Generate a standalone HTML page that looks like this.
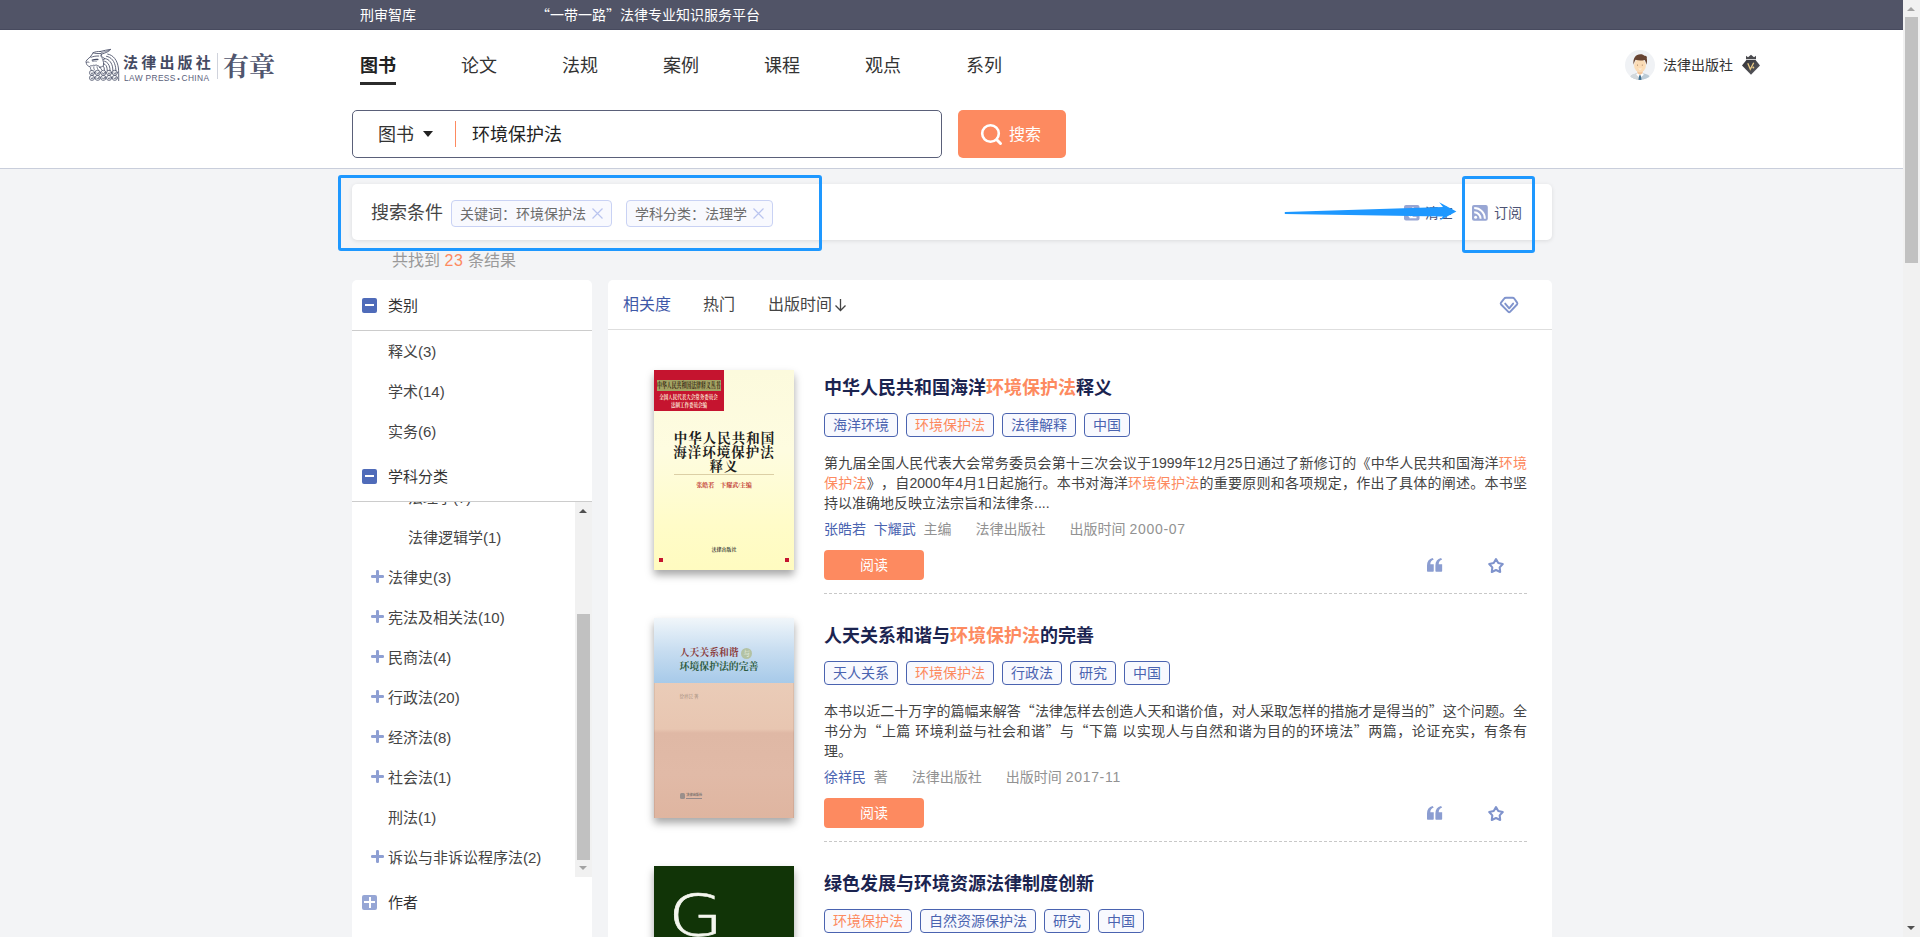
<!DOCTYPE html>
<html lang="zh-CN">
<head>
<meta charset="utf-8">
<title>有章 - 图书搜索</title>
<style>
*{box-sizing:border-box;margin:0;padding:0}
html,body{width:1920px;height:937px;overflow:hidden}
body{position:relative;background:#f3f4f6;font-family:"Liberation Sans","Noto Sans CJK SC",sans-serif;color:#333;font-size:14px;text-spacing-trim:space-all}
.abs{position:absolute}
/* top bar */
#topbar{position:absolute;left:0;top:0;width:1903px;height:30px;background:#515467;border-bottom:1px solid #474a5e;color:#fff;font-size:14px;line-height:30px}
#topbar>span{position:absolute;top:0;white-space:nowrap}
/* header */
#header{position:absolute;left:0;top:30px;width:1903px;height:139px;background:#fff;border-bottom:1px solid #c9cedb}
.nav{position:absolute;top:51px;height:30px;line-height:30px;font-size:18px;color:#333;white-space:nowrap}
.nav.on{font-weight:700;color:#222}
.nav.on:after{content:"";position:absolute;left:0;right:0;top:31px;height:3px;background:#2b2b2b}
#sbox{position:absolute;left:352px;top:110px;width:590px;height:48px;border:1px solid #5a6079;border-radius:5px;background:#fff}
#sbtn{position:absolute;left:958px;top:110px;width:108px;height:48px;border-radius:5px;background:#fd8a60;color:#fff;font-size:16px}
/* scrollbar */
#vsb{position:absolute;left:1903px;top:0;width:17px;height:937px;background:#f1f1f1}
#vsb .thumb{position:absolute;left:2px;top:17px;width:13px;height:246px;background:#c1c1c1}
.tri-up{position:absolute;width:0;height:0;border-left:4px solid transparent;border-right:4px solid transparent;border-bottom:4px solid #a3a3a3}
.tri-dn{position:absolute;width:0;height:0;border-left:4px solid transparent;border-right:4px solid transparent;border-top:4px solid #505050}
/* condition card */
#cond{position:absolute;left:352px;top:184px;width:1200px;height:56px;background:#fff;border-radius:5px;box-shadow:0 1px 4px rgba(0,0,0,.10)}
.ctag{position:absolute;top:16px;height:27px;border:1px solid #c9d2f4;border-radius:4px;background:#f8f9fe;font-size:14px;line-height:27px;color:#6c6c6c;white-space:nowrap;padding-left:8px}
.hl-rect{position:absolute;border:3px solid #1e98ff;border-radius:3px}
/* panels */
#left{position:absolute;left:352px;top:280px;width:240px;height:657px;background:#fff;border-radius:5px 5px 0 0}
#right{position:absolute;left:608px;top:280px;width:944px;height:657px;background:#fff;border-radius:5px 5px 0 0}
.fh{position:absolute;left:0;width:240px;height:50px}
.fh .ic{position:absolute;left:10px;top:17.500px;width:15px;height:15px;border-radius:2px;background:#4f6bb9}
.fh .ic:before{content:"";position:absolute;left:3px;top:6.5px;width:9px;height:2px;background:#fff}
.fh .ic.plus{background:#96a6d5}
.fh .ic.plus:before{left:2px;width:11px}
.fh .ic.plus:after{content:"";position:absolute;left:6.5px;top:2px;width:2px;height:11px;background:#fff}
.fh .t{position:absolute;left:36px;top:11px;line-height:30px;font-size:15px;color:#333}
.li{position:absolute;font-size:15px;line-height:30px;color:#444;white-space:nowrap}
.pl{position:absolute;width:12.500px;height:12.500px}
.pl:before{content:"";position:absolute;left:0;top:5px;width:12.500px;height:2.500px;border-radius:1.250px;background:#8e9fd3}
.pl:after{content:"";position:absolute;left:5px;top:0;width:2.500px;height:12.500px;border-radius:1.250px;background:#8e9fd3}
/* books */
.book{position:absolute;left:0;width:944px;height:248px}
.cover{position:absolute;left:46px;top:0;width:140px;height:200px;box-shadow:0 5px 8px rgba(0,0,0,.35);overflow:hidden}
.title{position:absolute;left:216px;top:3px;font-size:18px;font-weight:700;line-height:30px;color:#1b2450;white-space:nowrap}
.title b,.desc b,.tag b{font-weight:inherit;color:#fd8a60}
.tags{position:absolute;left:216px;top:43px;height:24px;white-space:nowrap;font-size:0}
.tag{display:inline-block;height:24px;line-height:22px;padding:0 8px;border:1px solid #4a63b0;border-radius:4px;background:#f8f9fe;color:#4a63b0;font-size:14px;margin-right:8px;vertical-align:top}
.desc{position:absolute;left:216px;top:83px;width:703px;font-size:14px;line-height:20px;color:#444;text-align:justify}
.meta{position:absolute;left:216px;top:149px;font-size:14px;line-height:20px;color:#929292;white-space:nowrap}
.meta a{color:#4a63b0;text-decoration:none}
.read{position:absolute;left:216px;top:180px;width:100px;height:30px;border-radius:4px;background:#fd8a60;color:#fff;font-size:14px;line-height:30px;text-align:center}
.sep{position:absolute;left:216px;top:223px;width:703px;height:0;border-top:1px dashed #c8c8c8}
.ico{position:absolute}
.q{font-family:"Noto Sans CJK SC",sans-serif;line-height:0}
.c1{position:absolute;left:0;top:0;width:140px;height:200px;background:linear-gradient(#fcfadd 0%,#fefce0 40%,#fffcc8 78%,#fffbc0 100%)}
.c2{position:absolute;left:0;top:0;width:140px;height:200px;background:linear-gradient(#eaccb8 32%,#e8c6b1 55.500%,#dfb8a5 57.500%,#e1baa7 78%,#dfb5a0 100%);box-shadow:inset 1px 0 0 rgba(120,90,70,.12),inset -1px 0 0 rgba(120,90,70,.12)}
.c3{position:absolute;left:0;top:0;width:140px;height:200px;background:#113407}
.sf{font-family:"Liberation Serif","Noto Serif CJK SC",serif}
.d{letter-spacing:.7px}
</style>
</head>
<body>

<div id="topbar">
  <span style="left:360px">刑审智库</span>
  <span style="left:536px"><span class="q">“</span>一带一路<span class="q">”</span>法律专业知识服务平台</span>
</div>

<div id="header"></div>

<!-- nav -->
<div class="nav on" style="left:360px">图书</div>
<div class="nav" style="left:461px">论文</div>
<div class="nav" style="left:562px">法规</div>
<div class="nav" style="left:663px">案例</div>
<div class="nav" style="left:764px">课程</div>
<div class="nav" style="left:865px">观点</div>
<div class="nav" style="left:966px">系列</div>

<!-- search -->
<div id="sbox">
  <div class="abs" style="left:25px;top:9px;font-size:18px;line-height:30px;color:#333">图书</div>
  <div class="abs" style="left:69.700px;top:20px;width:0;height:0;border-left:5.800px solid transparent;border-right:5.800px solid transparent;border-top:6.600px solid #222"></div>
  <div class="abs" style="left:102px;top:10px;width:1px;height:26px;background:#fd8a60"></div>
  <div class="abs" style="left:119px;top:9px;font-size:18px;line-height:30px;color:#222">环境保护法</div>
</div>
<div id="sbtn">
  <svg class="abs" style="left:21px;top:12px" width="26" height="26" viewBox="0 0 26 26"><circle cx="11.5" cy="11.5" r="8.3" fill="none" stroke="#fff" stroke-width="2.6"/><path d="M17.800 17.800L21.500 21.500" stroke="#fff" stroke-width="3" stroke-linecap="round"/></svg>
  <div class="abs" style="left:51px;top:10px;line-height:30px">搜索</div>
</div>

<!-- logo -->
<svg class="abs" style="left:84px;top:47px" width="38" height="36" viewBox="0 0 38 36" fill="none" stroke="#474d66" stroke-width=".85" stroke-linecap="round" stroke-linejoin="round">
  <path d="M23.700 7.100C29.500 8 33.400 13.500 34.400 21C34.800 24 34.700 29 34.700 33.600"/>
  <path d="M22.500 9.300C27.300 10 30.700 14.500 31.600 20.500L31.900 23.500"/>
  <path d="M21.500 11.700C25.300 12.300 28 16 28.700 21L28.900 23.500"/>
  <path d="M20.600 14.200C23.300 14.800 25.300 17.500 25.900 21.300L26 23.500"/>
  <path d="M20 16.800C21.700 17.400 22.800 19.200 23.100 21.600L23.200 23.500"/>
  <path d="M19.500 19.400C20.100 20 20.400 21.500 20.400 23.300"/>
  <path d="M16.300 4.500C19.500 3.600 23.500 2.800 26.800 2.300C25.500 4.300 21.500 6 17.300 7.200"/>
  <path d="M17.500 5.600C20 5 22.800 4.200 25 3.300" stroke-width=".6"/>
  <path d="M16.300 4.500C13.500 4.300 10.800 4.800 9.100 5.800C8.200 7.300 7.200 8.800 6.100 10.100C4.500 11.300 3 12.600 2.100 14.100C2 15 2.100 15.800 2.400 16.500C2.600 17.300 3 17.900 3.500 18.300C4 19 4.600 19.500 5.300 19.700"/>
  <path d="M9.100 5.800C11.500 6.600 14.300 6.700 16.800 6.500"/>
  <path d="M6.900 10.300C9.400 9.300 12.200 8.900 14.700 9"/>
  <path d="M8.300 13.200C10.200 12.500 12.100 12.300 13.900 12.500" stroke-width="1.300"/>
  <path d="M8.600 14.400C10 14.100 11.400 14 12.600 14.100" stroke-width=".6"/>
  <path d="M2.600 15.400C3.400 14.900 4.300 14.900 5 15.300"/>
  <path d="M17.300 7.200C17.200 8.500 17.600 9.500 18.300 10.200L21 11.700C20 12.300 19.300 12.600 18.900 12.700C19.600 14.800 19.700 16.800 19.500 18.600C18.500 19.600 17 20.200 15.500 20.300"/>
  <path d="M16.500 8.500C17.500 9.800 18 11.200 18.900 12.700" stroke-width=".6"/>
  <path d="M5.300 19.700C6 18.800 7.200 18.500 8.200 18.900C8.800 18.200 10 18 10.900 18.500C11.600 17.900 12.800 17.900 13.500 18.600C14.200 18.300 15 18.800 15.500 20.300"/>
  <g stroke-width=".75">
  <path d="M6.600 20.500C6.200 21.600 6.600 22.700 7.500 23.300M9.800 19.800C9.600 21.200 10 22.400 10.800 23.200M13 19.800C13.200 21 13.600 22.200 14.500 23.200M16.300 20.500C16.600 21.500 17.200 22.500 18 23.200"/>
  <circle cx="8" cy="25.800" r="2.550"/><circle cx="13.700" cy="25.800" r="2.550"/><circle cx="19.400" cy="25.800" r="2.550"/><circle cx="25.100" cy="25.800" r="2.550"/><circle cx="30.800" cy="25.800" r="2.550"/>
  <circle cx="8" cy="30.900" r="2.550"/><circle cx="13.700" cy="30.900" r="2.550"/><circle cx="19.400" cy="30.900" r="2.550"/><circle cx="25.100" cy="30.900" r="2.550"/><circle cx="30.800" cy="30.900" r="2.550"/>
  <path d="M7.100 25.900a1.050 1.050 0 1 0 1.700-.9M12.800 25.900a1.050 1.050 0 1 0 1.700-.9M18.500 25.900a1.050 1.050 0 1 0 1.700-.9M24.200 25.900a1.050 1.050 0 1 0 1.700-.9M29.900 25.900a1.050 1.050 0 1 0 1.700-.9"/>
  <path d="M7.100 31a1.050 1.050 0 1 0 1.700-.9M12.800 31a1.050 1.050 0 1 0 1.700-.9M18.500 31a1.050 1.050 0 1 0 1.700-.9M24.200 31a1.050 1.050 0 1 0 1.700-.9M29.900 31a1.050 1.050 0 1 0 1.700-.9"/>
  </g>
</svg>
<div class="abs" style="left:123px;top:48px;font-size:15px;line-height:30px;font-weight:700;letter-spacing:3.200px;color:#454a62;white-space:nowrap">法律出版社</div>
<div class="abs" style="left:124px;top:71px;font-size:8.400px;line-height:14px;letter-spacing:.35px;color:#5a607a;white-space:nowrap">LAW PRESS<span style="font-size:7px;margin:0 1.500px;position:relative;top:-.5px">•</span>CHINA</div>
<div class="abs" style="left:217px;top:53px;width:1px;height:26px;background:#d0d3dc"></div>
<div class="abs sf" style="left:223px;top:48px;font-size:26px;line-height:40px;font-weight:700;color:#50566e;white-space:nowrap">有章</div>
<!-- user -->
<svg class="abs" style="left:1625px;top:50px" width="30" height="30" viewBox="0 0 30 30">
  <defs><clipPath id="avc"><circle cx="15" cy="15" r="15"/></clipPath></defs>
  <circle cx="15" cy="15" r="15" fill="#f0f2f5"/>
  <g clip-path="url(#avc)">
    <path d="M4 30C4.500 25.500 8 23.800 12.500 23.300h5C22 23.800 25.500 25.500 26 30z" fill="#bccbd6"/><path d="M4 30C4.500 25.500 8 23.800 12.500 23.300H15V30z" fill="#d2d8dc"/>
    <path d="M12.300 20h5.400v3.800L15 25.500l-2.700-1.700z" fill="#f4c89e"/>
    <path d="M12.200 23.200L15 25l2.800-1.800 1 1.600-2.600 2.200L15 25.600 13.800 27l-2.600-2.200z" fill="#fff"/>
    <path d="M14.300 25.300h1.400l.9 4.700h-3.200z" fill="#3f6f90"/>
    <ellipse cx="15" cy="15.500" rx="5.900" ry="6.800" fill="#fbdcb6"/>
    <path d="M8.600 14.800C7.600 8 11 4.200 15.500 4.300c2 0 3.200.6 4 1.500 1.800-.3 2.800 1 2.300 2.600.5 2 .2 4.400-.4 6.400-.3-2.300-1-3.800-1.800-4.800-3 .8-6.500.6-9-.2-.9 1.400-1.600 2.800-2 5z" fill="#674432"/>
    <ellipse cx="12.500" cy="15.200" rx=".55" ry=".85" fill="#c4a282"/><ellipse cx="17.300" cy="15.200" rx=".55" ry=".85" fill="#c4a282"/>
    <path d="M13.200 18.400c1.100 1.400 2.700 1.400 3.800 0-1 .3-2.800.3-3.800 0z" fill="#fff"/>
  </g>
</svg>
<div class="abs" style="left:1663px;top:50px;font-size:14px;line-height:30px;color:#333;white-space:nowrap">法律出版社</div>
<svg class="abs" style="left:1741px;top:54px" width="20" height="22" viewBox="0 0 20 22">
  <defs><linearGradient id="bdg" x1="0" y1="0" x2="1" y2="1"><stop offset="0" stop-color="#323236"/><stop offset="1" stop-color="#5d5d62"/></linearGradient></defs>
  <path d="M5 5.300V1.800l2 1.500L10 .8l3 2.500 2-1.500v3.500z" fill="#4a4a4e"/>
  <path d="M5.400 6h9.200L19 11.500 10 20.800 1 11.500z" fill="url(#bdg)"/>
  <path d="M6.800 9.300l2.500 6 3.400-6.600" fill="none" stroke="#e9c983" stroke-width="1.300"/>
  <circle cx="12.300" cy="13.600" r="1" fill="#e9c983"/>
</svg>

<!-- condition -->
<div id="cond">
  <div class="abs" style="left:19px;top:14px;font-size:18px;line-height:30px;color:#444">搜索条件</div>
  <div class="ctag" style="left:99px;width:161px">关键词：环境保护法<svg class="abs" style="right:8px;top:7px" width="11" height="11" viewBox="0 0 11 11"><path d="M.5.500l10 10M10.500.500l-10 10" stroke="#b9c4ef" stroke-width="1.200"/></svg></div>
  <div class="ctag" style="left:274px;width:147px">学科分类：法理学<svg class="abs" style="right:8px;top:7px" width="11" height="11" viewBox="0 0 11 11"><path d="M.5.500l10 10M10.500.500l-10 10" stroke="#b9c4ef" stroke-width="1.200"/></svg></div>
  <svg class="abs" style="left:1052px;top:21px" width="16" height="16" viewBox="0 0 16 16"><rect x="0" y="0" width="15.500" height="15.500" rx="2" fill="#98a6d4"/><path d="M3 8.500l6-5.500 3.500 3.800-6 5.700zM5.500 12.500h7" stroke="#fff" stroke-width="1.300" fill="none"/></svg>
  <div class="abs" style="left:1073px;top:14px;font-size:14px;line-height:30px;color:#4d5374;white-space:nowrap">清空</div>
  <svg class="abs" style="left:1120px;top:21px" width="16" height="16" viewBox="0 0 16 16"><rect x="0" y="0" width="15.800" height="15.800" rx="2" fill="#98a6d4"/><circle cx="3.600" cy="12.300" r="1.500" fill="#fff"/><path d="M2.200 7.300a6.400 6.400 0 0 1 6.400 6.400M2.200 3a10.700 10.700 0 0 1 10.700 10.700" fill="none" stroke="#fff" stroke-width="2"/></svg>
  <div class="abs" style="left:1142px;top:14px;font-size:14px;line-height:30px;color:#4d5374;white-space:nowrap">订阅</div>
</div>
<div class="abs" style="left:392px;top:246px;font-size:16px;line-height:30px;color:#999;white-space:nowrap">共找到 <span style="color:#fd8a60;letter-spacing:.6px">23</span> 条结果</div>

<!-- left -->
<div id="left">
  <div class="fh" style="top:0"><div class="ic"></div><div class="t">类别</div></div>
  <div class="abs" style="left:0;top:50px;width:240px;height:1px;background:#ccc"></div>
  <div class="li" style="left:36px;top:57px">释义(3)</div>
  <div class="li" style="left:36px;top:97px">学术(14)</div>
  <div class="li" style="left:36px;top:137px">实务(6)</div>
  <div class="fh" style="top:171px"><div class="ic"></div><div class="t">学科分类</div></div>
  <div class="abs" style="left:0;top:221px;width:240px;height:1px;background:#ccc"></div>
  <div class="abs" id="tree" style="left:0;top:222px;width:240px;height:375px;overflow:hidden">
    <div class="li" style="left:56px;top:-19px">法理学(7)</div>
    <div class="li" style="left:56px;top:21px">法律逻辑学(1)</div>
    <div class="pl" style="left:19.250px;top:68.4px"></div><div class="li" style="left:36px;top:61px">法律史(3)</div>
    <div class="pl" style="left:19.250px;top:108.4px"></div><div class="li" style="left:36px;top:101px">宪法及相关法(10)</div>
    <div class="pl" style="left:19.250px;top:148.4px"></div><div class="li" style="left:36px;top:141px">民商法(4)</div>
    <div class="pl" style="left:19.250px;top:188.4px"></div><div class="li" style="left:36px;top:181px">行政法(20)</div>
    <div class="pl" style="left:19.250px;top:228.4px"></div><div class="li" style="left:36px;top:221px">经济法(8)</div>
    <div class="pl" style="left:19.250px;top:268.4px"></div><div class="li" style="left:36px;top:261px">社会法(1)</div>
    <div class="li" style="left:36px;top:301px">刑法(1)</div>
    <div class="pl" style="left:19.250px;top:348.4px"></div><div class="li" style="left:36px;top:341px">诉讼与非诉讼程序法(2)</div>
    <div class="abs" style="left:223px;top:0;width:17px;height:375px;background:#f1f1f1">
      <div class="tri-up" style="left:4px;top:7px;border-bottom-color:#505050"></div>
      <div class="abs" style="left:2px;top:112px;width:13px;height:246px;background:#c1c1c1"></div>
      <div class="tri-dn" style="left:4px;top:364px;border-top-color:#a3a3a3"></div>
    </div>
  </div>
  <div class="fh" style="top:597px"><div class="ic plus"></div><div class="t">作者</div></div>
</div>
<!-- right -->
<div id="right">
  <div class="abs" style="left:15px;top:10px;font-size:16px;line-height:30px;color:#3f59a8;white-space:nowrap">相关度</div>
  <div class="abs" style="left:95px;top:10px;font-size:16px;line-height:30px;color:#444;white-space:nowrap">热门</div>
  <div class="abs" style="left:160px;top:10px;font-size:16px;line-height:30px;color:#444;white-space:nowrap">出版时间</div>
  <svg class="abs" style="left:226px;top:18px" width="13" height="14" viewBox="0 0 13 14"><path d="M6.500 1V12.300M1.500 7.500l5 5 5-5" fill="none" stroke="#444" stroke-width="1.300"/></svg>
  <svg class="abs" style="left:890px;top:15px" width="22" height="20" viewBox="0 0 22 20"><path d="M8 2.800H14.500Q15.700 2.800 16.400 3.800L19.100 7.600Q19.800 8.600 19 9.500L12 16.900Q11.200 17.700 10.400 16.900L3.100 9.500Q2.300 8.600 3 7.600L6 3.800Q6.750 2.800 8 2.800z" fill="none" stroke="#8094cd" stroke-width="1.900" stroke-linejoin="round"/><path d="M7.200 8.600L11.200 13.300 15.100 8.600" fill="none" stroke="#8094cd" stroke-width="1.900" stroke-linecap="round" stroke-linejoin="round"/></svg>
  <div class="abs" style="left:0;top:49px;width:944px;height:1px;background:#dedede"></div>
  <div class="book" style="top:90px">
    <div class="cover"><div class="c1">
      <div class="abs" style="left:0;top:0;width:70px;height:41px;background:#c5142f"></div>
      <div class="abs sf" style="left:3px;top:10px;width:64px;height:11px;background:#a3a364;color:#3a2a14;font-size:8px;line-height:11px;font-weight:700;white-space:nowrap;overflow:hidden"><span style="display:inline-block;transform:scaleX(.61);transform-origin:0 50%">中华人民共和国法律释义丛书</span></div>
      <div class="abs sf" style="left:0;top:24px;width:70px;text-align:center;color:#fbe9d8;font-size:5px;line-height:7px;font-weight:700;white-space:nowrap"><span style="display:inline-block;transform:scale(.9,1.150)">全国人民代表大会常务委员会</span></div>
      <div class="abs sf" style="left:0;top:32px;width:70px;text-align:center;color:#fbe9d8;font-size:5px;line-height:7px;font-weight:700;white-space:nowrap"><span style="display:inline-block;transform:scale(.9,1.150)">法制工作委员会编</span></div>
      <div class="abs sf" style="left:0;top:62px;width:140px;text-align:center;color:#1c1c1c;font-size:13.500px;line-height:14px;font-weight:700;letter-spacing:1px;text-indent:1px;white-space:nowrap">中华人民共和国<br>海洋环境保护法<br>释义</div>
      <div class="abs" style="left:20px;top:104px;width:100px;height:1px;background:#dccfa5"></div>
      <div class="abs sf" style="left:0;top:111px;width:140px;text-align:center;color:#c23a32;font-size:6px;line-height:9px;font-weight:700;white-space:nowrap">张皓若　卞耀武/主编</div>
      <div class="abs sf" style="left:0;top:176px;width:140px;text-align:center;color:#333;font-size:5px;line-height:7px;font-weight:700;white-space:nowrap">法律出版社</div>
      <div class="abs" style="left:5px;top:188px;width:4px;height:4px;background:#c5142f"></div>
      <div class="abs" style="left:131px;top:188px;width:4px;height:4px;background:#c5142f"></div>
    </div></div>
    <div class="title">中华人民共和国海洋<b>环境保护法</b>释义</div>
    <div class="tags"><span class="tag">海洋环境</span><span class="tag"><b>环境保护法</b></span><span class="tag">法律解释</span><span class="tag">中国</span></div>
    <div class="desc">第九届全国人民代表大会常务委员会第十三次会议于1999年12月25日通过了新修订的《中华人民共和国海洋<b>环境保护法</b>》，自2000年4月1日起施行。本书对海洋<b>环境保护法</b>的重要原则和各项规定，作出了具体的阐述。本书坚持以准确地反映立法宗旨和法律条....</div>
    <div class="meta"><a>张皓若</a>&nbsp; <a>卞耀武</a>&nbsp; 主编<span style="margin-left:24px">法律出版社</span><span style="margin-left:24px">出版时间 <span class="d">2000-07</span></span></div>
    <div class="read">阅读</div>
    <svg class="ico" style="left:819px;top:188.100px" width="16" height="14" viewBox="0 0 16 14"><path d="M0.00 13V7.500C0.00 3.500 2.00 .9 5.60 0L6.75 1.500C4.50 2.300 3.40 3.800 3.30 6.300H6.75V13Q6.75 13.750 6.00 13.750H0.75Q0.00 13.750 0.00 13zM8.40 13V7.500C8.40 3.500 10.40 .9 14.00 0L15.15 1.500C12.90 2.300 11.80 3.800 11.70 6.300H15.15V13Q15.15 13.750 14.40 13.750H9.15Q8.40 13.750 8.40 13z" fill="#8b9dd1"/></svg>
    <svg class="ico" style="left:879.100px;top:186.600px" width="18" height="18" viewBox="0 0 18 18"><path d="M9.00 2.05 L11.26 6.09 L15.80 6.99 L12.66 10.39 L13.20 14.98 L9.00 13.05 L4.80 14.98 L5.34 10.39 L2.20 6.99 L6.74 6.09z" fill="none" stroke="#7f93cc" stroke-width="2.050" stroke-linejoin="round"/></svg>
    <div class="sep"></div>
  </div>
  <div class="book" style="top:338px">
    <div class="cover"><div class="c2">
      <div class="abs" style="left:0;top:0;width:140px;height:65px;background:linear-gradient(#f1f6fa 0%,#deebf6 22%,#c6dcf0 52%,#a7cae9 100%)"></div>
      <div class="abs sf" style="left:25.800px;top:29px;color:#8a3b3b;font-size:9.800px;line-height:12px;font-weight:700;white-space:nowrap">人天关系和谐</div>
      <div class="abs sf" style="left:87.200px;top:29.500px;width:11px;height:11px;border-radius:50%;background:#b3c2a3;color:#eef3e8;font-size:6.500px;line-height:11px;text-align:center">与</div>
      <div class="abs sf" style="left:25.600px;top:43px;color:#2c5a40;font-size:9.850px;line-height:12px;font-weight:700;white-space:nowrap">环境保护法的完善</div>
      <div class="abs sf" style="left:25.500px;top:75px;color:#9c8979;font-size:4.500px;line-height:7px;white-space:nowrap">徐祥民 著</div>
      <div class="abs" style="left:25.600px;top:175.300px;width:5.500px;height:5.500px;border-radius:1.500px;background:#9a8f8b"></div>
      <div class="abs" style="left:32.300px;top:175px;color:#7d726e;font-size:3.200px;line-height:5px;font-weight:700;white-space:nowrap;border-bottom:.5px solid #94898a">法律出版社</div>
    </div></div>
    <div class="title">人天关系和谐与<b>环境保护法</b>的完善</div>
    <div class="tags"><span class="tag">天人关系</span><span class="tag"><b>环境保护法</b></span><span class="tag">行政法</span><span class="tag">研究</span><span class="tag">中国</span></div>
    <div class="desc">本书以近二十万字的篇幅来解答<span class="q">“</span>法律怎样去创造人天和谐价值，对人采取怎样的措施才是得当的<span class="q">”</span>这个问题。全书分为<span class="q">“</span>上篇 环境利益与社会和谐<span class="q">”</span>与<span class="q">“</span>下篇 以实现人与自然和谐为目的的环境法<span class="q">”</span>两篇，论证充实，有条有理。</div>
    <div class="meta"><a>徐祥民</a>&nbsp; 著<span style="margin-left:24px">法律出版社</span><span style="margin-left:24px">出版时间 <span class="d">2017-11</span></span></div>
    <div class="read">阅读</div>
    <svg class="ico" style="left:819px;top:188.100px" width="16" height="14" viewBox="0 0 16 14"><path d="M0.00 13V7.500C0.00 3.500 2.00 .9 5.60 0L6.75 1.500C4.50 2.300 3.40 3.800 3.30 6.300H6.75V13Q6.75 13.750 6.00 13.750H0.75Q0.00 13.750 0.00 13zM8.40 13V7.500C8.40 3.500 10.40 .9 14.00 0L15.15 1.500C12.90 2.300 11.80 3.800 11.70 6.300H15.15V13Q15.15 13.750 14.40 13.750H9.15Q8.40 13.750 8.40 13z" fill="#8b9dd1"/></svg>
    <svg class="ico" style="left:879.100px;top:186.600px" width="18" height="18" viewBox="0 0 18 18"><path d="M9.00 2.05 L11.26 6.09 L15.80 6.99 L12.66 10.39 L13.20 14.98 L9.00 13.05 L4.80 14.98 L5.34 10.39 L2.20 6.99 L6.74 6.09z" fill="none" stroke="#7f93cc" stroke-width="2.050" stroke-linejoin="round"/></svg>
    <div class="sep"></div>
  </div>
  <div class="book" style="top:586px">
    <div class="cover"><div class="c3">
      <svg class="abs" style="left:10px;top:20px" width="70" height="60" viewBox="0 0 70 60"><text x="5" y="52.500" transform="translate(-1.700 -2.400) scale(1.230 1)" font-family="'DejaVu Sans',sans-serif" font-weight="200" font-size="57" fill="#f4f6ee" stroke="#f4f6ee" stroke-width=".7">G</text></svg>
    </div></div>
    <div class="title">绿色发展与环境资源法律制度创新</div>
    <div class="tags"><span class="tag"><b>环境保护法</b></span><span class="tag">自然资源保护法</span><span class="tag">研究</span><span class="tag">中国</span></div>
    <div class="desc"></div>
    <div class="meta"></div>
    <div class="read">阅读</div>
    <svg class="ico" style="left:819px;top:188.100px" width="16" height="14" viewBox="0 0 16 14"><path d="M0.00 13V7.500C0.00 3.500 2.00 .9 5.60 0L6.75 1.500C4.50 2.300 3.40 3.800 3.30 6.300H6.75V13Q6.75 13.750 6.00 13.750H0.75Q0.00 13.750 0.00 13zM8.40 13V7.500C8.40 3.500 10.40 .9 14.00 0L15.15 1.500C12.90 2.300 11.80 3.800 11.70 6.300H15.15V13Q15.15 13.750 14.40 13.750H9.15Q8.40 13.750 8.40 13z" fill="#8b9dd1"/></svg>
    <svg class="ico" style="left:879.100px;top:186.600px" width="18" height="18" viewBox="0 0 18 18"><path d="M9.00 2.05 L11.26 6.09 L15.80 6.99 L12.66 10.39 L13.20 14.98 L9.00 13.05 L4.80 14.98 L5.34 10.39 L2.20 6.99 L6.74 6.09z" fill="none" stroke="#7f93cc" stroke-width="2.050" stroke-linejoin="round"/></svg>
    <div class="sep"></div>
  </div>
</div>

<!-- blue annotation -->
<svg class="abs" style="left:1280px;top:198px" width="182" height="28" viewBox="0 0 182 28"><path d="M4.800 14.100L163 8.900 159.200 4.300 176.400 13.400 159.600 22.600 163 18.400 4.800 16.100z" fill="#1e98ff"/></svg>
<div class="hl-rect" style="left:338px;top:175px;width:484px;height:76px"></div>
<div class="hl-rect" style="left:1462px;top:176px;width:73px;height:77px"></div>

<!-- page scrollbar -->
<div id="vsb">
  <div class="tri-up" style="left:4px;top:7px"></div>
  <div class="thumb"></div>
  <div class="tri-dn" style="left:4px;top:926px"></div>
</div>
</body>
</html>
